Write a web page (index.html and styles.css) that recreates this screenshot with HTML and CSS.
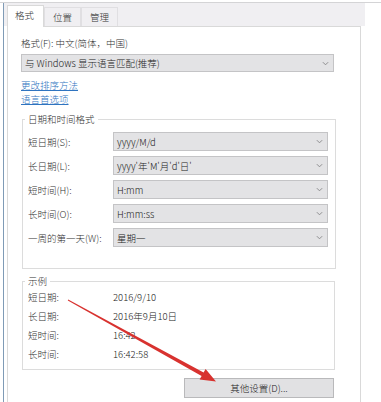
FILE: index.html
```html
<!DOCTYPE html>
<html lang="zh-CN">
<head>
<meta charset="utf-8">
<title>区域</title>
<link rel="stylesheet" href="styles.css">
</head>
<body>
<div class="topline"></div>
<div class="dialog">
  <div class="tabs">
    <div class="tab active">格式</div>
    <div class="tab">位置</div>
    <div class="tab">管理</div>
  </div>
  <div class="panel">
    <div class="inner">
      <div class="label">格式(F): 中文(简体，中国)</div>
      <div class="select wide"><span>与 Windows 显示语言匹配(推荐)</span><svg class="chev" viewBox="0 0 8 5"><path d="M1 1 L4 4 L7 1" /></svg></div>
      <a class="link first" href="#">更改排序方法</a>
      <a class="link" href="#">语言首选项</a>
      <fieldset class="group formats">
        <legend>日期和时间格式</legend>
        <div class="row"><span class="rlabel">短日期(S):</span><div class="select"><span>yyyy/M/d</span><svg class="chev" viewBox="0 0 8 5"><path d="M1 1 L4 4 L7 1" /></svg></div></div>
        <div class="row"><span class="rlabel">长日期(L):</span><div class="select"><span>yyyy'年'M'月'd'日'</span><svg class="chev" viewBox="0 0 8 5"><path d="M1 1 L4 4 L7 1" /></svg></div></div>
        <div class="row"><span class="rlabel">短时间(H):</span><div class="select"><span>H:mm</span><svg class="chev" viewBox="0 0 8 5"><path d="M1 1 L4 4 L7 1" /></svg></div></div>
        <div class="row"><span class="rlabel">长时间(O):</span><div class="select"><span>H:mm:ss</span><svg class="chev" viewBox="0 0 8 5"><path d="M1 1 L4 4 L7 1" /></svg></div></div>
        <div class="row"><span class="rlabel">一周的第一天(W):</span><div class="select"><span>星期一</span><svg class="chev" viewBox="0 0 8 5"><path d="M1 1 L4 4 L7 1" /></svg></div></div>
      </fieldset>
      <fieldset class="group example">
        <legend>示例</legend>
        <div class="erow"><span class="rlabel">短日期:</span><span class="val">2016/9/10</span></div>
        <div class="erow"><span class="rlabel">长日期:</span><span class="val">2016年9月10日</span></div>
        <div class="erow"><span class="rlabel">短时间:</span><span class="val">16:42</span></div>
        <div class="erow"><span class="rlabel">长时间:</span><span class="val">16:42:58</span></div>
      </fieldset>
      <div class="btnrow"><button class="btn" type="button">其他设置(D)...</button></div>
    </div>
  </div>
</div>
<svg class="arrow" width="381" height="402" viewBox="0 0 381 402">
  <polygon points="67.8,300.4 201.6,376.0 199.6,379.6 216,381.5 205.6,369.0 203.6,372.6 68.2,299.6" />
</svg>
</body>
</html>
```

FILE: styles.css
```css
html, body {
  margin: 0;
  padding: 0;
}
body {
  width: 381px;
  height: 402px;
  overflow: hidden;
  background: #ffffff;
  font-family: "Noto Sans CJK SC", "Noto Sans", sans-serif;
  font-size: 9.5px;
  font-weight: 300;
  color: #2a2a2a;
  position: relative;
}
.topline {
  margin-top: 2px;
  height: 1px;
  background: #d4d4d6;
}
.dialog {
  margin-left: 3px;
  width: 361px;
  height: 399px;
  border-left: 1px solid #7f9bb6;
  background: #ffffff;
}
.tabs {
  height: 23px;
  background: #f0eff2;
  display: flex;
  align-items: flex-end;
  padding-left: 3px;
  position: relative;
  z-index: 1;
}
.tab {
  width: 35px;
  height: 18px;
  line-height: 18px;
  text-align: center;
  border: 1px solid #e0dfe2;
  border-bottom: none;
  background: #f0eff2;
  color: #333;
}
.tab.active {
  height: 21px;
  line-height: 19px;
  background: #ffffff;
  border-color: #d9d9d9;
  margin-bottom: -1px;
  text-align: left;
  padding-left: 7px;
  width: 28px;
}
.panel {
  margin-left: 3px;
  width: 352px;
  height: 375px;
  border: 1px solid #d9d9d9;
  border-bottom: none;
  background: #ffffff;
}
.inner {
  padding: 10px 0 0 13px;
  width: 314px;
  display: flex;
  flex-direction: column;
}
.label {
  line-height: 12px;
  height: 12px;
  color: #333;
}
.select {
  box-sizing: border-box;
  height: 19px;
  background: #e3e3e5;
  border: 1px solid #c4c4c6;
  display: flex;
  align-items: center;
  justify-content: space-between;
  padding: 0 4px 0 3px;
  color: #222;
}
.select.wide {
  margin-top: 5px;
  width: 313px;
  height: 18px;
}
.chev {
  width: 7px;
  height: 5px;
  fill: none;
  stroke: #8a8a8c;
  stroke-width: 1.1;
}
.link {
  display: block;
  line-height: 12px;
  height: 12px;
  color: #2f74c0;
  text-decoration: underline;
  margin-top: 2px;
  align-self: flex-start;
}
.link.first {
  margin-top: 7px;
}
.group {
  margin: 0;
  border: 1px solid #dcdcdc;
  min-width: 0;
}
.group legend {
  padding: 0 3px;
  margin-left: -3px;
  line-height: 12px;
  color: #333;
}
.formats {
  margin-top: 8px;
  margin-left: 1px;
  width: 314px;
  box-sizing: border-box;
  padding: 7px 6px 21px 5px;
  display: flex;
  flex-direction: column;
  gap: 5px;
}
.row {
  display: flex;
  align-items: center;
}
.rlabel {
  width: 85px;
  flex: none;
  color: #333;
}
.row .select {
  width: 215px;
}
.example {
  margin-top: 6px;
  margin-left: 1px;
  width: 313px;
  box-sizing: border-box;
  padding: 1px 6px 5px 5px;
}
.erow {
  display: flex;
  height: 19px;
  line-height: 19px;
}
.val {
  color: #222;
}
.btnrow {
  display: flex;
  justify-content: flex-end;
  width: 313px;
  margin-top: 8px;
}
.btn {
  width: 150px;
  height: 20px;
  box-sizing: border-box;
  background: #e1e1e3;
  border: 1px solid #b9b9bb;
  font-family: inherit;
  font-size: 9.5px;
  font-weight: 300;
  color: #222;
  padding: 0;
}
.arrow {
  position: absolute;
  left: 0;
  top: 0;
  pointer-events: none;
}
.arrow polygon {
  fill: #d8322f;
}
```
